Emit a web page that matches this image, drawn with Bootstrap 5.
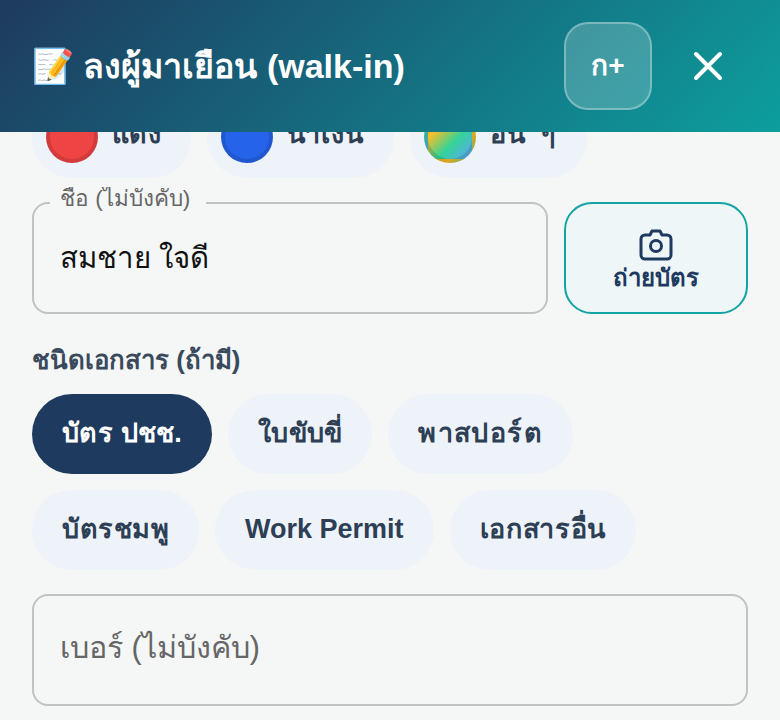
<!DOCTYPE html>
<html lang="th">
<head>
<meta charset="utf-8">
<title>ลงผู้มาเยือน</title>
<link href="https://cdn.jsdelivr.net/npm/bootstrap@5.3.0/dist/css/bootstrap.min.css" rel="stylesheet">
<style>
html,body{height:720px;overflow:hidden}
body{background:#f4f7f6;font-family:"Liberation Sans",sans-serif;color:#2d3f55}
.sheet{height:720px;overflow:hidden}
.top-bar{height:132px;padding:0 48px 0 32px;background:linear-gradient(135deg,#1e3a5f,#0d9e9e);position:relative;z-index:2;flex:none}
.top-title{font-size:34px;font-weight:700;color:#fff;margin:0;line-height:1.2}
.lang-btn{width:88px;height:88px;border-radius:24px;background:rgba(255,255,255,.2);border:2px solid rgba(255,255,255,.3);color:#fff;font-size:28px;font-weight:600;padding:0}
.close-btn{width:56px;height:56px;margin-left:28px;background:none;border:0;padding:0;margin-right:-4px}
.body-area{padding:0 32px;margin-top:-34px}
.opt-chip{height:80px;border-radius:40px;background:#eef2f9;border:0;color:#2d3f55;font-size:27px;font-weight:600;padding:0 30px 2px;white-space:nowrap}
.opt-chip.on{background:#1e3a5f;color:#fff}
.ls-a{letter-spacing:.25px}
.ls-b{letter-spacing:.5px}
.ls-c{letter-spacing:1.4px}
.ls-d{letter-spacing:.7px}
.ls-f{letter-spacing:1.1px}
.dot{width:52px;height:52px;border-radius:50%;border:4px solid rgba(0,0,0,.12)}
.dot-red{background:#ef4444}
.dot-blue{background:#2563eb}
.dot-multi{background:linear-gradient(135deg,#f59e0b,#fbbf24 25%,#34d399 60%,#60a5fa)}
.color-chip{padding:0 30px 2px 14px;gap:14px}
.chip-text{margin-bottom:6px}
.wide-space{word-spacing:8px}
.name-wrap{min-width:0;height:112px;border:2px solid #bfc3c3;border-radius:16px;padding:0 26px}
.name-label{top:-17px;left:16px;height:27px;overflow:hidden;font-size:22.5px;line-height:24px;color:#666;background:#f4f7f6;padding:0 16px 0 10px}
.name-input{border:0;outline:0;background:none;width:100%;height:100%;font-size:29.4px;color:#111;padding:0 0 2px;font-family:inherit}
.cam-btn{width:184px;height:112px;flex:none;border:2px solid #14a3a3;border-radius:28px;background:#eef6f8;color:#1e3a5f;font-size:24px;font-weight:600;padding:4px 0 0;line-height:1.1;gap:4px}
.field-title{font-size:25.8px;line-height:44px;font-weight:600;color:#3a4a5c;margin:0 0 12px}
.num-input{display:block;width:100%;height:112px;border:2px solid #bfc3c3;border-radius:16px;background:none;font-size:30.5px;padding:0 26px 6px;outline:0;font-family:inherit}
.num-input::placeholder{color:#666;opacity:1}
</style>
</head>
<body>
<div class="sheet d-flex flex-column">
  <header class="top-bar d-flex align-items-center">
    <h1 class="top-title flex-grow-1">📝 ลงผู้มาเยือน (walk-in)</h1>
    <button class="lang-btn" type="button">ก+</button>
    <button class="close-btn d-flex align-items-center justify-content-center" type="button" aria-label="ปิด">
      <svg width="32" height="32" viewBox="0 0 32 32" fill="none" stroke="#fff" stroke-width="4" stroke-linecap="round"><path d="M4 4 28 28M28 4 4 28"/></svg>
    </button>
  </header>
  <main class="body-area">
    <div class="d-flex gap-3 mb-4">
      <button class="opt-chip color-chip d-flex align-items-center" type="button"><span class="dot dot-red"></span><span class="chip-text ls-a">แดง</span></button>
      <button class="opt-chip color-chip d-flex align-items-center" type="button"><span class="dot dot-blue"></span><span class="chip-text ls-f">น้ำเงิน</span></button>
      <button class="opt-chip color-chip d-flex align-items-center" type="button"><span class="dot dot-multi"></span><span class="chip-text ls-b wide-space">อื่น ๆ</span></button>
    </div>
    <div class="d-flex gap-3 mb-4">
      <div class="name-wrap position-relative flex-grow-1">
        <label class="name-label position-absolute" for="nm">ชื่อ (ไม่บังคับ)</label>
        <input class="name-input" id="nm" type="text" value="สมชาย ใจดี">
      </div>
      <button class="cam-btn d-flex flex-column align-items-center justify-content-center" type="button">
        <svg width="36" height="32" viewBox="0 0 36 32" fill="none" stroke="#1e3a5f" stroke-width="3" stroke-linejoin="round"><path d="M12 6 14 2H22L24 6H29A4 4 0 0 1 33 10V26A4 4 0 0 1 29 30H7A4 4 0 0 1 3 26V10A4 4 0 0 1 7 6Z"/><circle cx="18" cy="17" r="5.5"/></svg>
        ถ่ายบัตร
      </button>
    </div>
    <p class="field-title">ชนิดเอกสาร (ถ้ามี)</p>
    <div class="d-flex flex-wrap gap-3 mb-4">
      <button class="opt-chip on ls-a" type="button">บัตร ปชช.</button>
      <button class="opt-chip ls-a" type="button">ใบขับขี่</button>
      <button class="opt-chip ls-c" type="button">พาสปอร์ต</button>
      <button class="opt-chip ls-b" type="button">บัตรชมพู</button>
      <button class="opt-chip" type="button">Work Permit</button>
      <button class="opt-chip ls-d" type="button">เอกสารอื่น</button>
    </div>
    <input class="num-input" type="text" placeholder="เบอร์ (ไม่บังคับ)" aria-label="เบอร์">
  </main>
</div>
<script src="https://cdn.jsdelivr.net/npm/bootstrap@5.3.0/dist/js/bootstrap.bundle.min.js"></script>
</body>
</html>
